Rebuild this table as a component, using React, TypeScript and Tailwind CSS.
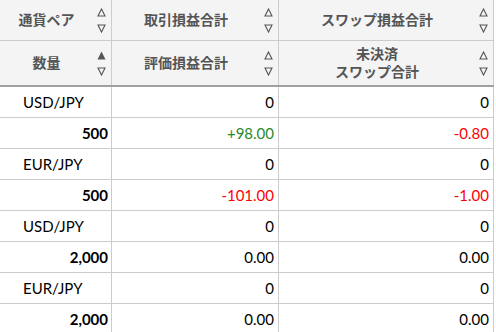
import React from 'react';

type SortState = 'none' | 'asc';

const SortIcon = ({ state }: { state: SortState }) => (
  <div className="flex flex-col items-center gap-[7px] text-[#555]">
    <svg width="9" height="9" viewBox="0 0 9 9">
      {state === 'asc' ? (
        <path d="M4.5 0.5 L8.5 8.5 L0.5 8.5 Z" fill="currentColor" />
      ) : (
        <path d="M4.5 1 L8 8 L1 8 Z" fill="none" stroke="currentColor" strokeWidth="1.1" />
      )}
    </svg>
    <svg width="9" height="9" viewBox="0 0 9 9">
      <path d="M1 1 L8 1 L4.5 8 Z" fill="none" stroke="currentColor" strokeWidth="1.1" />
    </svg>
  </div>
);

const HeaderCell = ({ children, sort = 'none' }: { children: React.ReactNode; sort?: SortState }) => (
  <div className="flex items-center bg-[#f4f4f4] border-r border-[#cccccc]">
    <div className="flex-1 text-center text-sm font-semibold leading-[18px] text-[#555]">{children}</div>
    <div className="pr-[5px] pl-1">
      <SortIcon state={sort} />
    </div>
  </div>
);

const rows = [
  { pair: 'USD/JPY', qty: '500', pl: '+98.00', swap: '-0.80', plColor: 'text-[#2a8a2a]', swapColor: 'text-[#ff0000]' },
  { pair: 'EUR/JPY', qty: '500', pl: '-101.00', swap: '-1.00', plColor: 'text-[#ff0000]', swapColor: 'text-[#ff0000]' },
  { pair: 'USD/JPY', qty: '2,000', pl: '0.00', swap: '0.00', plColor: 'text-black', swapColor: 'text-black' },
  { pair: 'EUR/JPY', qty: '2,000', pl: '0.00', swap: '0.00', plColor: 'text-black', swapColor: 'text-black' },
];

export default function App() {
  return (
    <div
      className="w-[496px] h-[332px] overflow-hidden bg-white"
      style={{ fontFamily: 'Lato, "Noto Sans CJK JP", sans-serif' }}
    >
      <div className="grid w-[494px] grid-cols-[112px_167px_215px]">
        {/* header row 1 */}
        <div className="h-[41px] border-b border-[#cccccc] grid">
          <HeaderCell>通貨ペア</HeaderCell>
        </div>
        <div className="h-[41px] border-b border-[#cccccc] grid">
          <HeaderCell>取引損益合計</HeaderCell>
        </div>
        <div className="h-[41px] border-b border-[#cccccc] grid">
          <HeaderCell>スワップ損益合計</HeaderCell>
        </div>
        {/* header row 2 */}
        <div className="h-[46px] border-b-2 border-[#a0a0a0] grid">
          <HeaderCell sort="asc">数量</HeaderCell>
        </div>
        <div className="h-[46px] border-b-2 border-[#a0a0a0] grid">
          <HeaderCell>評価損益合計</HeaderCell>
        </div>
        <div className="h-[46px] border-b-2 border-[#a0a0a0] grid">
          <HeaderCell>
            未決済
            <br />
            スワップ合計
          </HeaderCell>
        </div>

        {rows.map((r, i) => (
          <React.Fragment key={i}>
            <div className="h-[31px] border-b border-r border-[#cccccc] flex items-center pl-[23px] text-[15px] text-black">
              {r.pair}
            </div>
            <div className="h-[31px] border-b border-r border-[#cccccc] flex items-center justify-end pr-[4px] text-[15px] text-black">
              0
            </div>
            <div className="h-[31px] border-b border-r border-[#cccccc] flex items-center justify-end pr-[4px] text-[15px] text-black">
              0
            </div>
            <div className="h-[31px] border-b border-r border-[#cccccc] flex items-center justify-end pr-[3px] text-[15px] font-bold text-black">
              {r.qty}
            </div>
            <div className={`h-[31px] border-b border-r border-[#cccccc] flex items-center justify-end pr-[4px] text-[15px] ${r.plColor}`}>
              {r.pl}
            </div>
            <div className={`h-[31px] border-b border-r border-[#cccccc] flex items-center justify-end pr-[4px] text-[15px] ${r.swapColor}`}>
              {r.swap}
            </div>
          </React.Fragment>
        ))}
      </div>
    </div>
  );
}
